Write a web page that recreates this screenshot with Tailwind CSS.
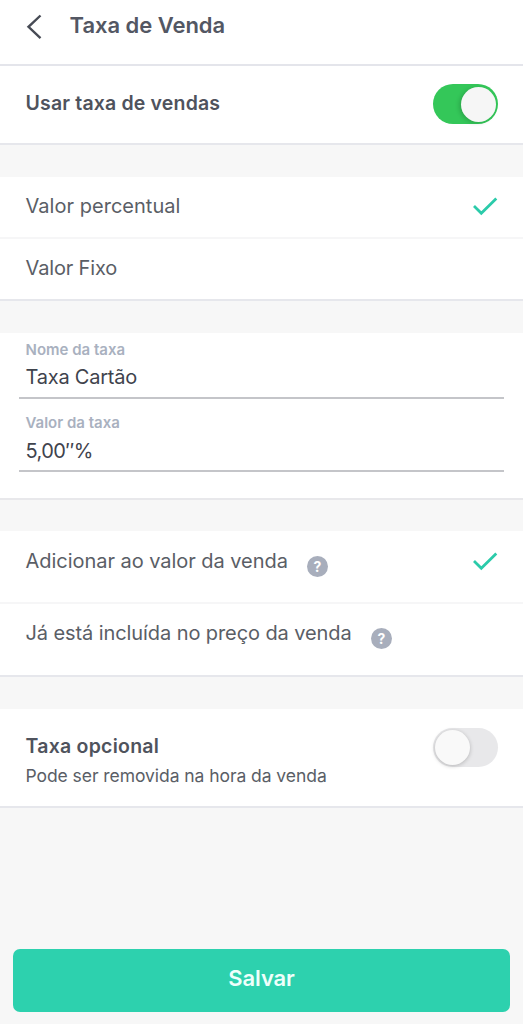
<!DOCTYPE html>
<html lang="pt-BR">
<head>
<meta charset="utf-8">
<title>Taxa de Venda</title>
<script src="https://cdn.jsdelivr.net/npm/@tailwindcss/browser@4"></script>
</head>
<body class="bg-[#f7f7f7] font-['Inter','Liberation_Sans',sans-serif] text-[#5a5e66]">
<main class="flex h-[1024px] w-[523px] flex-col overflow-hidden">
  <header class="flex h-[66px] shrink-0 items-start border-b-2 border-[#e4e5eb] bg-white pl-[26px]">
    <svg class="mt-[14px] h-[26px] w-4" viewBox="0 0 16 26" fill="none" stroke="#474b55" stroke-width="2.4"><path d="M14.5 1.5 2.5 12.8l12 11.3"/></svg>
    <h1 class="ml-[27.5px] mt-[11px] text-[22px] leading-7 font-semibold tracking-[-0.03px] whitespace-nowrap text-[#535763]">Taxa de Venda</h1>
  </header>

  <section class="flex h-[79px] shrink-0 items-start justify-between border-b-2 border-[#e6e7ec] bg-white pr-[25px] pl-[25.5px]">
    <h2 class="mt-[23px] text-[19.5px] leading-7 font-semibold tracking-[0.17px] text-[#4f535d]">Usar taxa de vendas</h2>
    <div class="mt-[18px] flex h-10 w-[65px] justify-end rounded-full bg-[#34c759] p-[2.5px]"><span class="size-[35px] rounded-full bg-[#f6f6f6] shadow-[-2px_1px_4px_rgba(0,0,0,0.16)]"></span></div>
  </section>

  <section class="mt-8 h-[124px] shrink-0 border-b-2 border-[#e6e7ec] bg-white">
    <div class="flex h-[62px] items-start justify-between border-b-2 border-[#f6f6f7] pr-[25px] pl-[25.5px]">
      <span class="mt-[15px] text-[20px] leading-7 tracking-[0.03px]">Valor percentual</span>
      <svg class="mt-[19px] h-5 w-[26px]" viewBox="0 0 26 20" fill="none" stroke="#2bcbaa" stroke-width="2.8"><path d="m2 10 7.3 7.2L24.3 2.5"/></svg>
    </div>
    <div class="pt-[15px] pl-[25.5px] text-[20px] leading-7 tracking-[-0.15px]">Valor Fixo</div>
  </section>

  <section class="mt-8 h-[167px] shrink-0 border-b-2 border-[#e8e8eb] bg-white px-[19px] text-[#3f434d]">
    <div class="h-[66px] border-b-2 border-[#c4c5c9] pt-[7px] pl-[6.5px]">
      <div class="text-[15px] leading-5 font-semibold tracking-[0px] text-[#a9b1bf]">Nome da taxa</div>
      <div class="mt-[3px] text-[20px] leading-7 tracking-[-0.22px]">Taxa Cartão</div>
    </div>
    <div class="h-[73px] border-b-2 border-[#c4c5c9] pt-[14px] pl-[6.5px]">
      <div class="text-[15px] leading-5 font-semibold tracking-[0px] text-[#a9b1bf]">Valor da taxa</div>
      <div class="mt-[4px] text-[20px] leading-7 tracking-[-0.55px]">5,00″%</div>
    </div>
  </section>

  <section class="mt-[31px] h-[146px] shrink-0 border-b-2 border-[#e6e7ec] bg-white">
    <div class="flex h-[73px] items-start border-b-2 border-[#f6f6f7] pr-[25px] pl-[25.5px]">
      <span class="mt-[16px] w-[281.5px] whitespace-nowrap text-[20px] leading-7 tracking-[-0.04px]">Adicionar ao valor da venda</span>
      <span class="mt-[25px] flex size-[21px] items-center justify-center rounded-full bg-[#a8aebc] text-[14px] font-bold text-white">?</span>
      <svg class="mt-[20px] ml-auto h-5 w-[26px]" viewBox="0 0 26 20" fill="none" stroke="#2bcbaa" stroke-width="2.8"><path d="m2 10 7.3 7.2L24.3 2.5"/></svg>
    </div>
    <div class="flex items-start pl-[25.5px]">
      <span class="mt-[15px] w-[345.5px] whitespace-nowrap text-[20px] leading-7 tracking-[-0.09px]">Já está incluída no preço da venda</span>
      <span class="mt-[24px] flex size-[21px] items-center justify-center rounded-full bg-[#a8aebc] text-[14px] font-bold text-white">?</span>
    </div>
  </section>

  <section class="mt-8 flex h-[99px] shrink-0 items-start justify-between border-b-2 border-[#e6e7ec] bg-white pr-[25px] pl-[25.5px]">
    <div class="pt-[23px]">
      <h2 class="text-[19.5px] leading-7 font-semibold tracking-[0.25px] text-[#4f535d]">Taxa opcional</h2>
      <p class="mt-[4px] text-[17.5px] leading-6 tracking-[-0.06px]">Pode ser removida na hora da venda</p>
    </div>
    <div class="mt-[19px] flex h-[39px] w-[65px] rounded-full bg-[#e8e8ea] p-[2px]"><span class="size-[35px] rounded-full bg-[#f9f9f9] shadow-[0_1px_4px_rgba(0,0,0,0.22)]"></span></div>
  </section>

  <button class="mx-[13px] mt-auto mb-[12px] h-[63px] shrink-0 rounded-[7px] bg-[#2dd1ae] pb-[5px] text-[22px] font-semibold tracking-[-0.1px] text-[#effffb]">Salvar</button>
</main>
</body>
</html>
